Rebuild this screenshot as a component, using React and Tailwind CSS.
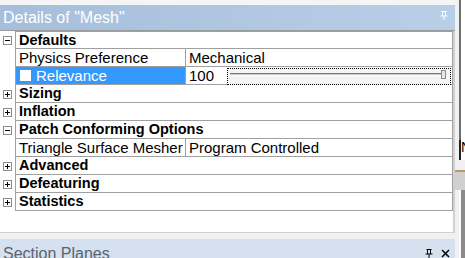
import { useState } from 'react'

const ROWS = [
  { type: 'group', label: 'Defaults', open: true },
  { type: 'prop', label: 'Physics Preference', value: 'Mechanical' },
  { type: 'slider', label: 'Relevance', value: '100' },
  { type: 'group', label: 'Sizing' },
  { type: 'group', label: 'Inflation' },
  { type: 'group', label: 'Patch Conforming Options', open: true },
  { type: 'prop', label: 'Triangle Surface Mesher', value: 'Program Controlled' },
  { type: 'group', label: 'Advanced' },
  { type: 'group', label: 'Defeaturing' },
  { type: 'group', label: 'Statistics' },
]

function Toggle({ open }) {
  return (
    <div className="w-[9px] h-[9px] border border-[#8c8c8c] bg-white relative">
      <div className="absolute left-[1px] top-[3px] w-[5px] h-px bg-black" />
      {!open && <div className="absolute left-[3px] top-[1px] w-px h-[5px] bg-black" />}
    </div>
  )
}

function Pin({ color = '#fff' }) {
  return (
    <svg width="8" height="9" viewBox="0 0 8 9">
      <path d="M1.5 0.5h5M2.5 0.5v4.5M5.5 0.5v4.5M0.5 5h7M4 5v4" stroke={color} strokeWidth="1" fill="none" />
    </svg>
  )
}

export default function App() {
  const [rel] = useState(100)

  return (
    <div className="w-[465px] h-[258px] overflow-hidden bg-[#f0f0f0] flex text-[15px] font-['Liberation_Sans',Arial,sans-serif] leading-none">
      {/* Details panel */}
      <div className="w-[455px] shrink-0 flex flex-col">
        <div className="h-[5px] shrink-0 bg-[#f5f5f5]" />
        <div className="h-[26px] shrink-0 bg-gradient-to-r from-[#a6bedb] to-[#b9cfe8] flex items-center px-[3px] border-b border-[#9a9a9a]">
          <span className="text-white text-[16px]">Details of "Mesh"</span>
          <span className="ml-auto mr-[4px] mt-[-4px]"><Pin /></span>
        </div>
        <div className="h-[202px] shrink-0 bg-white flex flex-col border-r-2 border-b border-[#d0d0d0]">
          {ROWS.map((r, i) => (
            <div key={i} className="flex h-[18px] shrink-0">
              <div className="w-[15px] flex items-center justify-center shrink-0">
                {r.type === 'group' && <Toggle open={r.open} />}
              </div>
              <div className={`flex-1 flex border-l border-b border-r border-[#a0a0a0] ${i === 0 ? 'border-t' : ''}`}>
                {r.type === 'group' ? (
                  <div className="flex items-center pl-[3px] font-bold text-[14.5px] text-black whitespace-nowrap">{r.label}</div>
                ) : (
                  <>
                    <div className={`w-[170px] shrink-0 flex items-center border-r border-[#a0a0a0] whitespace-nowrap ${r.type === 'slider' ? 'bg-[#3399ff] text-white pl-[3px]' : 'pl-[3px] text-black'}`}>
                      {r.type === 'slider' && <div className="w-[11px] h-[11px] bg-white mr-[5px] ml-px" />}
                      {r.label}
                    </div>
                    <div className="flex-1 flex items-center pl-[3px] text-black whitespace-nowrap">
                      <span className="w-[38px] shrink-0">{r.value}</span>
                      {r.type === 'slider' && (
                        <div className="flex-1 h-[17px] mt-[1px] mr-[1px] border border-dotted border-black bg-[#f4f4f4] relative">
                          <div className="absolute left-[2px] right-[8px] top-[4px] h-[3px] border-t border-[#7a7a7a] border-b border-b-white bg-[#c8c8c8]" />
                          <div className="absolute right-[4px] top-[1px] w-[5px] h-[9px] border border-[#8a8a8a] bg-[#e8e8e8]" style={{ opacity: rel ? 1 : 0 }} />
                        </div>
                      )}
                    </div>
                  </>
                )}
              </div>
            </div>
          ))}
        </div>
        <div className="h-[6px] shrink-0 bg-[#f0f0f0]" />
        <div className="flex-1 bg-[#d5e1ef] flex items-start px-[3px] pt-[6px]">
          <span className="text-[#5a6470] text-[16px] leading-[18px]">Section Planes</span>
          <span className="ml-auto mr-[8px] mt-[4px]"><Pin color="#000" /></span>
          <svg width="9" height="9" viewBox="0 0 9 9" className="mr-[2px] mt-[4px]">
            <path d="M1 1L8 8M8 1L1 8" stroke="#000" strokeWidth="1.5" />
          </svg>
        </div>
      </div>
      {/* right edge of neighbour window */}
      <div className="flex-1 flex flex-col">
        <div className="h-[140px] flex">
          <div className="w-[4px] bg-[#f0f0f0]" />
          <div className="w-[2px] bg-[#6e6e6e]" />
          <div className="flex-1 bg-white" />
        </div>
        <div className="h-[20px] flex bg-white">
          <div className="w-[4px] bg-[#f0f0f0]" />
          <div className="w-[2px] bg-[#222]" />
          <span className="text-[14px] text-black">N</span>
        </div>
        <div className="h-[10px] bg-[#f0f0f0]" />
        <div className="h-[20px] bg-[#d0d0d0] border-t-2 border-[#b89860]" />
        <div className="flex-1 flex">
          <div className="w-[4px] bg-[#f0f0f0]" />
          <div className="w-[2px] bg-[#fafafa]" />
          <div className="flex-1 bg-[#8a8a8a]" />
        </div>
      </div>
    </div>
  )
}
